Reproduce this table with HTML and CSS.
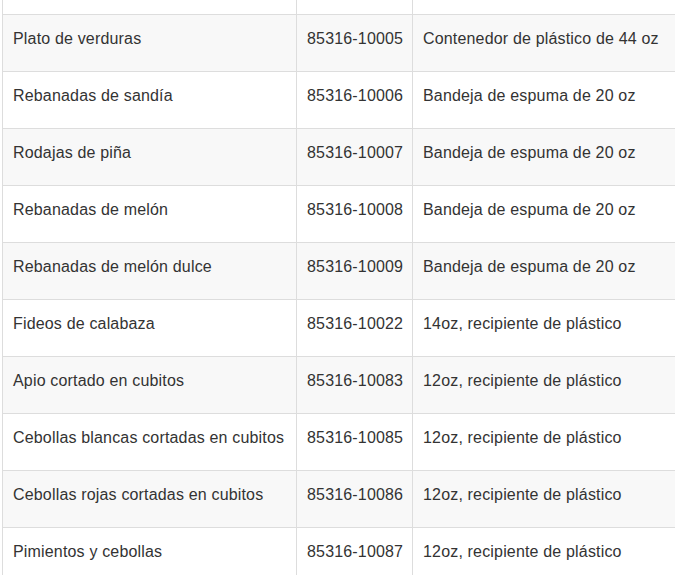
FILE: index.html
```html
<!DOCTYPE html>
<html lang="es">
<head>
<meta charset="utf-8">
<title>Productos</title>
<link rel="stylesheet" href="styles.css">
</head>
<body>
<div class="wrap">
<table class="products">
<colgroup>
<col class="c1"><col class="c2"><col class="c3">
</colgroup>
<tbody>
<tr class="top"><td></td><td></td><td></td></tr>
<tr><td>Plato de verduras</td><td>85316-10005</td><td>Contenedor de plástico de 44 oz</td></tr>
<tr><td>Rebanadas de sandía</td><td>85316-10006</td><td>Bandeja de espuma de 20 oz</td></tr>
<tr><td>Rodajas de piña</td><td>85316-10007</td><td>Bandeja de espuma de 20 oz</td></tr>
<tr><td>Rebanadas de melón</td><td>85316-10008</td><td>Bandeja de espuma de 20 oz</td></tr>
<tr><td>Rebanadas de melón dulce</td><td>85316-10009</td><td>Bandeja de espuma de 20 oz</td></tr>
<tr><td>Fideos de calabaza</td><td>85316-10022</td><td>14oz, recipiente de plástico</td></tr>
<tr><td>Apio cortado en cubitos</td><td>85316-10083</td><td>12oz, recipiente de plástico</td></tr>
<tr><td>Cebollas blancas cortadas en cubitos</td><td>85316-10085</td><td>12oz, recipiente de plástico</td></tr>
<tr><td>Cebollas rojas cortadas en cubitos</td><td>85316-10086</td><td>12oz, recipiente de plástico</td></tr>
<tr><td>Pimientos y cebollas</td><td>85316-10087</td><td>12oz, recipiente de plástico</td></tr>
</tbody>
</table>
</div>
</body>
</html>
```
FILE: styles.css
```css
html, body {
  margin: 0;
  padding: 0;
  background: #fff;
  overflow: hidden;
}
.wrap {
  padding-left: 2px;
  width: 673px;
  overflow: hidden;
}
.products {
  border-collapse: collapse;
  table-layout: fixed;
  width: 720px;
  margin-top: -43px;
  font-family: "Liberation Sans", Arial, sans-serif;
  font-size: 16px;
  line-height: 20px;
  letter-spacing: 0.17px;
  color: #333;
}
.c1 { width: 294px; }
.c2 { width: 116px; }
.products td {
  border: 1px solid #ddd;
  padding: 14px 10px 22px 10px;
  vertical-align: top;
  white-space: nowrap;
  overflow: hidden;
}
.products tr.top td {
  height: 20px;
}
.products tbody tr:nth-child(even) td {
  background: #f8f8f8;
}
```
